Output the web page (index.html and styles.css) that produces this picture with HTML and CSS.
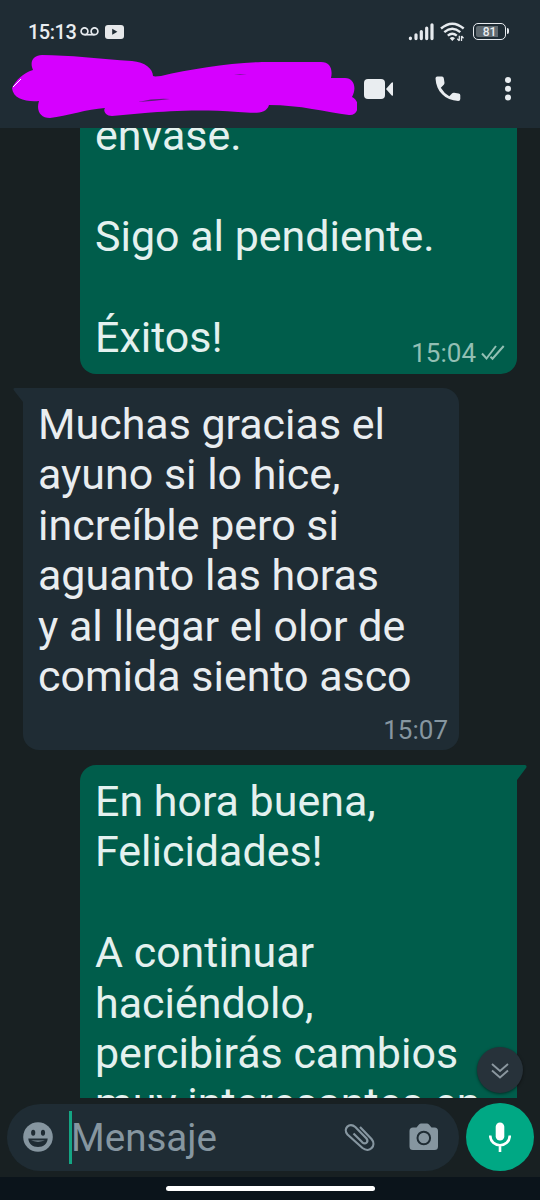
FILE: index.html
```html
<!DOCTYPE html>
<html lang="es">
<head>
<meta charset="utf-8">
<title>Chat</title>
<link rel="stylesheet" href="styles.css">
</head>
<body>
<div class="screen">
  <header class="top">
    <div class="status">
      <span class="clock">15:13</span>
      <svg class="voicemail" width="19" height="10" viewBox="0 0 19 10"><g fill="none" stroke="#e6eaee" stroke-width="1.7"><circle cx="4.500" cy="4.200" r="3.400"/><circle cx="14.500" cy="4.200" r="3.400"/><path d="M4.500 7.700h10"/></g></svg>
      <svg class="video-app" width="19" height="14" viewBox="0 0 19 14"><rect width="19" height="14" rx="3" fill="#e6e8ea"/><path d="M7.200 3.800v6l5.200-3z" fill="#1f2c34"/></svg>
      <svg class="signal" width="26" height="18" viewBox="0 0 26 18"><path d="M2.400 15v.600M8 11.800v3.800M13.300 8.600v7M18.700 5v10.600M24 1.800v13.800" fill="none" stroke="#e6eaee" stroke-width="3.200" stroke-linecap="round"/></svg>
      <svg class="wifi" width="25" height="20" viewBox="0 0 25 20"><g fill="none" stroke="#e6eaee" stroke-width="2.400"><path d="M1 6.500Q12.300-3.200 23.700 6.500"/><path d="M4.300 10.100Q12.300 3.400 20.300 10.100"/><path d="M7.800 13.600Q12.300 9.900 16.800 13.600"/></g><path d="M9.700 16.200Q12.300 13.700 15 16.200L12.300 19z" fill="#e6eaee"/><path d="M19.300 13.800v5M17.300 16.700l2 2.200M21.500 19v-5M23.500 16.200l-2-2.200" stroke="#e6eaee" stroke-width="1.300" fill="none"/></svg>
      <span class="battery"><span class="level">81</span></span>
    </div>
    <div class="appbar">
      <svg class="scribble" width="345" height="64" viewBox="12 54 345 64"><path d="M42 55C68 55 101 59 132 61C145 62 153 69 153 76C155 77 158 76 161 76C190 69 230 63 262 62L321 62C330 62 333 69 331 78L345 78C354 78 357 88 352 97C361 101 359 116 349 115C326 112 300 105 269 105C266 115 254 113 238 112C200 109 170 111 145 113L112 116C105 116 103 110 105 108C87 109 67 116 50 118C40 118 36 110 39 101C26 102 13 99 12 88C16 80 23 73 33 70C29 61 34 55 42 55Z" fill="#d600ff"/><path d="M138 102Q154 98 170 99Q155 101 138 102zM234 74.300L247 74.400L240 75z" fill="#572174"/><path d="M13 87l8-8" stroke="#fff" stroke-width="1"/></svg>
      <svg class="cam" width="29" height="20" viewBox="0 0 29 20"><rect width="21" height="20" rx="4" fill="#e9edf0"/><path d="M22 10L27.500 3.700Q29 2.500 29 4V16Q29 17.500 27.500 16.300z" fill="#e9edf0"/></svg>
      <svg class="call" width="26" height="26" viewBox="0 0 26 26"><path d="M2.300.500H7Q8.600.500 8.800 2.200L9.500 6.800Q9.600 8 8.800 8.800L5.800 11.700Q9 17.200 14.300 20.200L17.200 17.200Q18 16.500 19.100 16.700L23.600 17.400Q25.300 17.700 25.300 19.200V23Q25.300 25 23.200 25C10 24.300 1.300 15.500.500 2.500Q.500.500 2.300.500Z" fill="#e9edf0"/></svg>
      <svg class="more" width="6" height="24" viewBox="0 0 6 24"><g fill="#e9edf0"><circle cx="3" cy="3" r="3"/><circle cx="3" cy="11.700" r="3"/><circle cx="3" cy="20.400" r="3"/></g></svg>
    </div>
  </header>

  <main class="chat">
    <article class="bubble sent first">
      <p class="text">envase.<br><br>Sigo al pendiente.<br><br>Éxitos!</p>
      <div class="meta">15:04 <svg class="ticks" width="24" height="16" viewBox="0 0 24 16"><path d="M1 8.500l4.500 5L15 1M9.500 11.800l2 1.900L22.700 1" fill="none" stroke="#92bfb3" stroke-width="2"/></svg></div>
    </article>
    <article class="bubble received">
      <svg class="tail tail-left" width="11" height="16" viewBox="0 0 11 16"><path d="M11 0H2Q-.500 0 1 2.500L10 14V16H11Z" fill="#1f2c34"/></svg>
      <p class="text">Muchas gracias el<br>ayuno si lo hice,<br>increíble pero si<br>aguanto las horas<br>y al llegar el olor de<br>comida siento asco</p>
      <div class="meta">15:07</div>
    </article>
    <article class="bubble sent last">
      <svg class="tail tail-right" width="11" height="16" viewBox="0 0 11 16"><path d="M0 0H9Q11.500 .500 10 3L1 15V16H0Z" fill="#005d4b"/></svg>
      <p class="text">En hora buena,<br>Felicidades!<br><br>A continuar<br>haciéndolo,<br>percibirás cambios<br>muy interesantes en</p>
    </article>
    <button class="to-end" aria-label="Ir al final"><svg width="18" height="18" viewBox="0 0 18 18"><path d="M1 3l8 7 8-7M1 9.500l8 7 8-7" fill="none" stroke="#8b979f" stroke-width="1.900"/></svg></button>
  </main>

  <footer class="composer">
    <div class="field">
      <svg class="emoji" width="30" height="30" viewBox="0 0 30 30"><circle cx="15" cy="15" r="14.800" fill="#8696a0"/><g fill="#1f2c34"><ellipse cx="10.200" cy="10.800" rx="2.100" ry="3"/><ellipse cx="20" cy="10.800" rx="2.100" ry="3"/><path d="M5.300 16.500H24.700C24.400 21.500 20.500 25 15 25S5.600 21.500 5.300 16.500Z"/></g><path d="M8 18.500H22Q15 20.800 8 18.500Z" fill="#8696a0"/></svg>
      <span class="caret"></span>
      <span class="placeholder">Mensaje</span>
      <svg class="clip" width="32" height="30" viewBox="0 0 32 30"><path d="M16 4L27.500 16C33 22.500 25.500 30.500 18.500 25L3.500 11.500C-1.500 5.500 5.500-1 11.300 4L22.500 15.500C25 19 21.500 22 18.300 19.300L9.500 10.500" fill="none" stroke="#8696a0" stroke-width="2.200"/></svg>
      <svg class="photo" width="30" height="28" viewBox="0 0 30 28"><path d="M4 4.500H7.500L10 1.500Q11 .500 12 .500H18Q19 .500 20 1.500L22.500 4.500H25.500Q29 4.500 29 8V23.500Q29 27 25.500 27H4Q.500 27 .500 23.500V8Q.500 4.500 4 4.500Z" fill="#8696a0"/><circle cx="14.800" cy="15" r="6.300" fill="#8696a0" stroke="#1f2c34" stroke-width="2"/></svg>
    </div>
    <button class="mic" aria-label="Grabar audio"><svg width="22" height="30" viewBox="0 0 22 30"><rect x="6.700" y=".500" width="8.600" height="18" rx="4.300" fill="#fff"/><path d="M1.200 13.500C1.500 26.500 20.500 26.500 20.800 13.500M11 23v7" fill="none" stroke="#fff" stroke-width="2.600"/></svg></button>
  </footer>
  <div class="nav"><span class="handle"></span></div>
</div>
</body>
</html>
```
FILE: styles.css
```css
* { box-sizing: border-box; }
body { margin: 0; background: #182022; font-family: Roboto, "Noto Sans", sans-serif; }
svg { display: block; flex: none; }
button { border: 0; padding: 0; display: flex; align-items: center; justify-content: center; border-radius: 50%; }
.screen { width: 540px; height: 1200px; display: flex; flex-direction: column; overflow: hidden; background: #182022; }

.top { height: 128px; flex: none; background: #1f2c34; position: relative; z-index: 1; }
.status { display: flex; align-items: flex-start; height: 54px; padding: 22px 34px 0 28px; color: #e9edf0; }
.clock { font-size: 20px; line-height: 20px; font-weight: 500; letter-spacing: -0.5px; width: 48px; white-space: nowrap; }
.voicemail { margin: 5px 0 0 4px; }
.video-app { margin: 3px 0 0 6px; }
.signal { margin: 1px 0 0 auto; }
.wifi { margin: 0 0 0 6px; }
.battery { position: relative; margin: 1px 0 0 8px; width: 33px; height: 17px; border: 1.5px solid #e6eaee; border-radius: 5px; padding: 2px; flex: none; }
.battery::after { content: ""; position: absolute; right: -4px; top: 4px; width: 2px; height: 6px; border-radius: 0 2px 2px 0; background: #e6eaee; }
.level { display: block; height: 11px; font-size: 12px; line-height: 12px; font-weight: 500; text-align: center; background: linear-gradient(90deg, #606a70 81%, transparent 81%); border-radius: 2px; }
.appbar { display: flex; align-items: flex-start; padding-left: 12px; }
.cam { margin: 25px 0 0 7px; }
.call { margin: 22px 0 0 42px; }
.more { margin: 23px 0 0 44px; }

.chat { flex: 1; min-height: 0; position: relative; overflow: hidden; display: flex; flex-direction: column; }
.bubble { position: relative; width: 436px; flex: none; border-radius: 16px; padding: 12px 15px; }
.sent { align-self: flex-end; width: 437px; margin-right: 23px; background: #005d4b; color: #e4f1ef; }
.received { margin: 14px 0 15px 23px; padding-top: 11px; height: 362px; background: #1f2c34; color: #e9edf0; border-top-left-radius: 0; }
.first { margin-top: -30px; height: 276px; }
.last { border-top-right-radius: 0; padding-top: 11px; }
.text { margin: 0; font-size: 42.95px; line-height: 50.4px; white-space: nowrap; }
.meta { position: absolute; right: 12px; bottom: 6px; display: flex; align-items: center; gap: 5px; font-size: 26px; line-height: 30px; color: #8696a0; }
.sent .meta { color: #92bfb3; }
.received .meta { right: 11px; bottom: 5px; }
.tail { position: absolute; top: 0; }
.tail-left { left: -10px; }
.tail-right { right: -10px; }
.to-end { position: absolute; right: 17px; bottom: 5px; width: 46px; height: 46px; background: #27323a; box-shadow: 0 1px 3px rgba(0, 0, 0, .5); }

.composer { height: 79px; flex: none; display: flex; align-items: flex-start; gap: 7px; padding: 5px 6px 0 7px; }
.field { width: 452px; height: 67px; margin-top: 1px; border-radius: 34px; background: #1f2c34; display: flex; align-items: center; padding: 0 20px 0 16px; }
.emoji { margin-top: -1px; }
.caret { width: 3px; height: 53px; margin-left: 16px; background: #14a583; }
.placeholder { margin-left: -1px; font-size: 38.6px; line-height: 46px; color: #8696a0; }
.clip { margin-left: auto; }
.photo { margin: -2px 0 0 33px; }
.mic { width: 68px; height: 68px; background: #00a884; }
.nav { height: 23px; flex: none; background: #0b141b; display: flex; justify-content: center; padding-top: 9px; }
.handle { width: 209px; height: 5px; border-radius: 3px; background: #fff; }
```
